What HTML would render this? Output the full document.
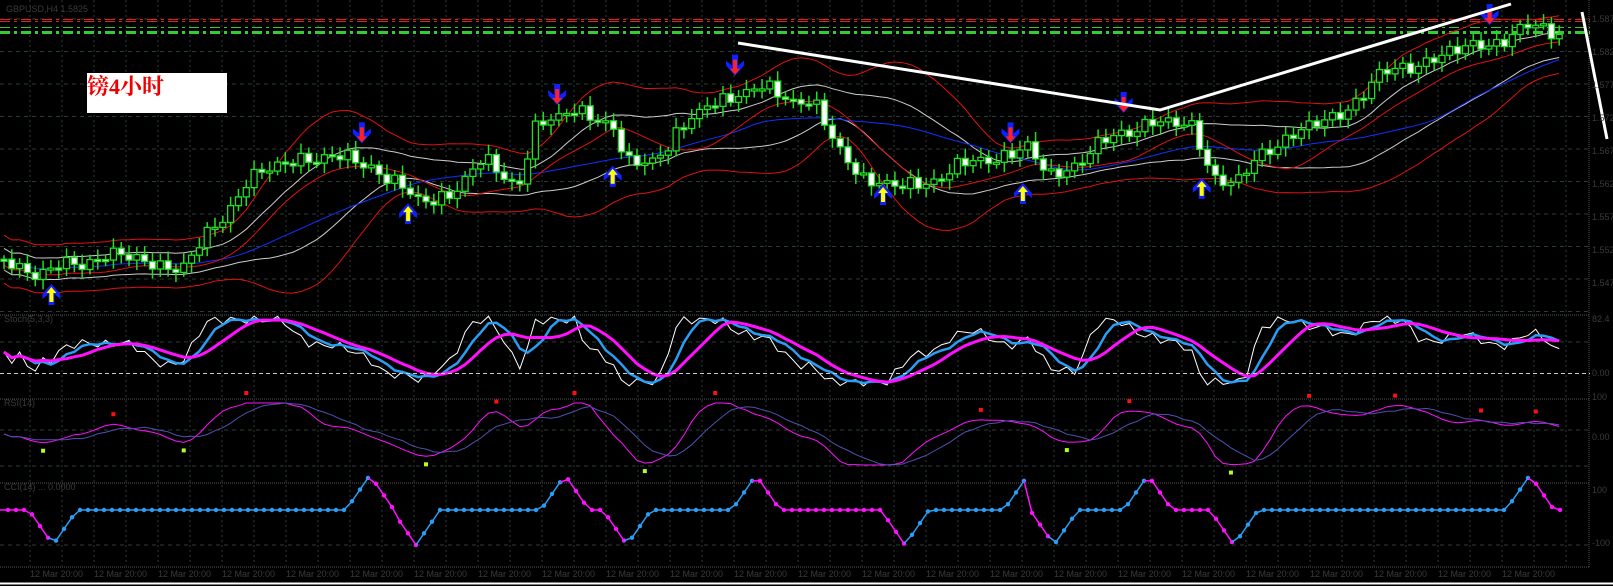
<!DOCTYPE html>
<html><head><meta charset="utf-8"><style>
html,body{margin:0;padding:0;background:#000;width:1613px;height:586px;overflow:hidden}
svg{display:block}
.lbl{position:absolute;left:87px;top:73px;width:140px;height:40px;background:#fff;color:#e00;font:bold 22px "Liberation Serif","Noto Serif CJK SC",serif;line-height:28px}
</style></head><body>
<svg id="s" width="1613" height="586" xmlns="http://www.w3.org/2000/svg"></svg>
<div class="lbl">镑4小时</div>
<script>
var S=document.getElementById('s'),out=[];
function L(a){out.push(a)}
var SX=1.028,SY=1.01;
for(var x=30;x<1590;x+=32)L('<line x1="'+x+'" y1="0" x2="'+x+'" y2="566" stroke="#2e3d33" stroke-dasharray="2,3"/>');
for(var y=19;y<312;y+=32.5)L('<line x1="0" y1="'+y+'" x2="1590" y2="'+y+'" stroke="#2e3d33" stroke-dasharray="4,4"/>');
[342,430,466,545].forEach(function(y){L('<line x1="0" y1="'+y+'" x2="1590" y2="'+y+'" stroke="#2e3d33" stroke-dasharray="4,4"/>')});
[315,399,483,567].forEach(function(y){L('<line x1="0" y1="'+y+'" x2="1590" y2="'+y+'" stroke="#555" stroke-dasharray="1,1"/>')});
L('<line x1="1589" y1="0" x2="1589" y2="567" stroke="#555" stroke-dasharray="1,1"/>');
L('<line x1="0" y1="583.5" x2="1613" y2="583.5" stroke="#fff" stroke-width="2"/>');
L('<line x1="0" y1="19.5" x2="1590" y2="19.5" stroke="#e02020" stroke-dasharray="10,4,3,4"/>');
L('<line x1="0" y1="21.5" x2="1590" y2="21.5" stroke="#e02020" stroke-dasharray="10,4,3,4"/>');
L('<line x1="0" y1="27.5" x2="1590" y2="27.5" stroke="#33cc33" stroke-dasharray="10,4,3,4"/>');
L('<line x1="0" y1="32.5" x2="1590" y2="32.5" stroke="#33cc33" stroke-width="3" stroke-dasharray="10,4,3,4"/>');
function interp(k,x){for(var i=0;i<k.length-1;i++){if(x<=k[i+1][0]){var t=(x-k[i][0])/(k[i+1][0]-k[i][0]);return k[i][1]+(k[i+1][1]-k[i][1])*t}}return k[k.length-1][1]}
var pk=[[0,255],[40,272],[100,252],[180,265],[240,180],[290,155],[360,160],[380,180],[410,200],[440,190],[470,160],[505,180],[520,130],[560,105],[595,125],[610,165],[650,145],[690,100],[740,88],[790,100],[810,140],[840,175],[880,188],[920,170],[960,158],[1000,145],[1020,178],[1060,150],[1120,118],[1160,128],[1180,172],[1205,182],[1230,150],[1260,130],[1300,118],[1335,80],[1390,58],[1440,45],[1490,28],[1525,32]].map(function(p){return[p[0]*SX,p[1]*SY]});
var N=200,dx=1563/N,C=[],X=[];
for(var i=0;i<N;i++){var x=4+i*dx;X.push(x);C.push(interp(pk,x)+8*Math.sin(i*2.1)*Math.abs(Math.sin(i*0.53))+4*Math.sin(i*0.7))}
function sma(a,n){return a.map(function(v,i){var s=0,c=0;for(var j=Math.max(0,i-n+1);j<=i;j++){s+=a[j];c++}return s/c})}
function sd(a,m,n){return a.map(function(v,i){var s=0,c=0;for(var j=Math.max(0,i-n+1);j<=i;j++){s+=(a[j]-m[i])*(a[j]-m[i]);c++}return Math.max(Math.sqrt(s/c),12)})}
function pl(xs,ys,col,w){var d=xs.map(function(x,i){return(i?'L':'M')+x.toFixed(1)+' '+ys[i].toFixed(1)}).join('');L('<path d="'+d+'" fill="none" stroke="'+col+'" stroke-width="'+(w||1)+'"/>')}
var m20=sma(C,20),s20=sma(sd(C,m20,20),5),m10=sma(C,12);
pl(X,m20.map(function(m,i){return m-2*s20[i]}),'#e01010');
pl(X,m20.map(function(m,i){return m+2*s20[i]}),'#e01010');
pl(X,m20.map(function(m,i){return m-0.9*s20[i]}),'#cccccc');
pl(X,m20.map(function(m,i){return m+0.9*s20[i]}),'#cccccc');
pl(X,sma(C,30),'#1030ff');
pl(X,m10.map(function(v){return v+6}),'#e01010');
for(var i=0;i<N;i++){var o=i?C[i-1]:C[i],c=C[i],x=X[i];var hi=Math.min(o,c)-4-6*Math.abs(Math.sin(i*1.7)),lo=Math.max(o,c)+4+6*Math.abs(Math.cos(i*1.3));
L('<line x1="'+x+'" y1="'+hi+'" x2="'+x+'" y2="'+lo+'" stroke="#22dd22" stroke-width="1.5"/>');
var t=Math.min(o,c),h=Math.max(Math.abs(o-c),2);L('<rect x="'+(x-3)+'" y="'+t+'" width="6" height="'+h+'" fill="'+(c<o?'#000':'#fff')+'" stroke="#22dd22" stroke-width="1.3"/>')}
function up(x,y){x*=SX;y*=SY;L('<path d="M'+x+' '+(y-14)+'l-9 10v5l6-5v11h6v-11l6 5v-5z" fill="#1020ff"/><path d="M'+x+' '+(y-11)+'l-5 6h3v9h4v-9h3z" fill="#ffff00"/>')}
function dn(x,y){x*=SX;y*=SY;L('<path d="M'+(x-3)+' '+(y-14)+'h6v11l6-5v5l-9 10-9-10v-5l6 5z" fill="#1020ff"/><path d="M'+(x-2)+' '+(y-9)+'h4v9h3l-5 6-5-6h3z" fill="#ff2020"/>')}
[[50,295],[397,215],[596,178],[859,196],[995,195],[1169,190]].forEach(function(p){up(p[0],p[1])});
[[352,135],[542,97],[715,68],[983,135],[1093,105],[1449,18]].forEach(function(p){dn(p[0],p[1])});
L('<path d="M738 43L1160 110L1511 4" fill="none" stroke="#fff" stroke-width="3"/><path d="M1582 12L1607 139" stroke="#fff" stroke-width="3"/>');
function mom(n,mid,sc,lo,hi){return C.map(function(v,i){var p=C[Math.max(0,i-n)];var y=mid-(p-v)*sc;return Math.max(lo,Math.min(hi,y))})}
var w2=mom(6,352,0.9,320,382);w2=w2.map(function(v,i){return v+4*Math.sin(i*2.3)});pl(X,w2,'#ffffff');pl(X,sma(w2,4),'#2a9df4',2.5);pl(X,sma(w2,8),'#ff10ff',3);
L('<line x1="0" y1="373.5" x2="1590" y2="373.5" stroke="#ccc" stroke-dasharray="4,3"/>');
var w3=mom(8,434,0.6,403,465);var m3=sma(w3,3),q3=sma(w3,8);pl(X,m3,'#ff10ff');pl(X,q3,'#5050b0');
var lm=-99;for(var i=2;i<N-2;i++){if(i-lm<6)continue;if(m3[i]<m3[i-1]&&m3[i]<=m3[i+1]&&m3[i]<m3[i-2]&&m3[i]<425){L('<rect x="'+(X[i]-2)+'" y="'+(m3[i]-12)+'" width="4" height="4" fill="#ff1010"/>');lm=i}
else if(m3[i]>m3[i-1]&&m3[i]>=m3[i+1]&&m3[i]>m3[i+2]&&m3[i]>440){L('<rect x="'+(X[i]-2)+'" y="'+(m3[i]+6)+'" width="4" height="4" fill="#b0ff20"/>');lm=i}}
var B=510,dips=[53,416,627,905,1054,1234],peaks=[370,565,756,1028,1148,1530],ev=[];
dips.forEach(function(d){ev.push([d,'d'])});peaks.forEach(function(p){ev.push([p,'p'])});ev.sort(function(a,b){return a[0]-b[0]});
var px=[],py=[],pc=[];
for(var x=0;x<1567;x+=8){var y=B;
ev.forEach(function(e){var d=x-e[0];var a=e[1]=='d'?35:-35;if(d>-24&&d<24)y=B+a*(1-Math.abs(d)/24)});
var last=null;ev.forEach(function(e){if(e[0]<=x)last=e[1]});var col=(last=='d')?'#2a9df4':'#ff10ff';
ev.forEach(function(e){if(e[1]=='p'&&x>e[0]-24&&x<=e[0])col='#2a9df4';if(e[1]=='d'&&x>e[0]-24&&x<=e[0])col='#ff10ff'});
px.push(x);py.push(y);pc.push(col)}
for(var i=1;i<px.length;i++){L('<line x1="'+px[i-1]+'" y1="'+py[i-1]+'" x2="'+px[i]+'" y2="'+py[i]+'" stroke="'+pc[i]+'" stroke-width="1.5"/>');L('<circle cx="'+px[i]+'" cy="'+py[i]+'" r="2.2" fill="'+pc[i]+'"/>')}
var ft='font-family="Liberation Sans,sans-serif" font-size="9" fill="#3a3a3a"';
L('<text x="6" y="12" '+ft+'>GBPUSD,H4  1.5825</text><text x="4" y="322" '+ft+'>Stoch(5,3,3)</text><text x="4" y="406" '+ft+'>RSI(14)</text><text x="4" y="490" '+ft+'>CCI(14) ... 0.0000</text>');
var ax=['1.5870','1.5820','1.5770','1.5720','1.5670','1.5620','1.5570','1.5520','1.5470'];for(var i=0;i<9;i++)L('<text x="1592" y="'+(22+i*33)+'" '+ft+'>'+ax[i]+'</text>');
['82.4','0.00','100','0.00','100','-100'].forEach(function(t,i){L('<text x="1592" y="'+[322,376,400,440,493,546][i]+'" '+ft+'>'+t+'</text>')});
for(var x=30;x<1560;x+=64)L('<text x="'+x+'" y="577" '+ft+'>12 Mar 20:00</text>');
S.innerHTML=out.join('');
</script>
</body></html>
